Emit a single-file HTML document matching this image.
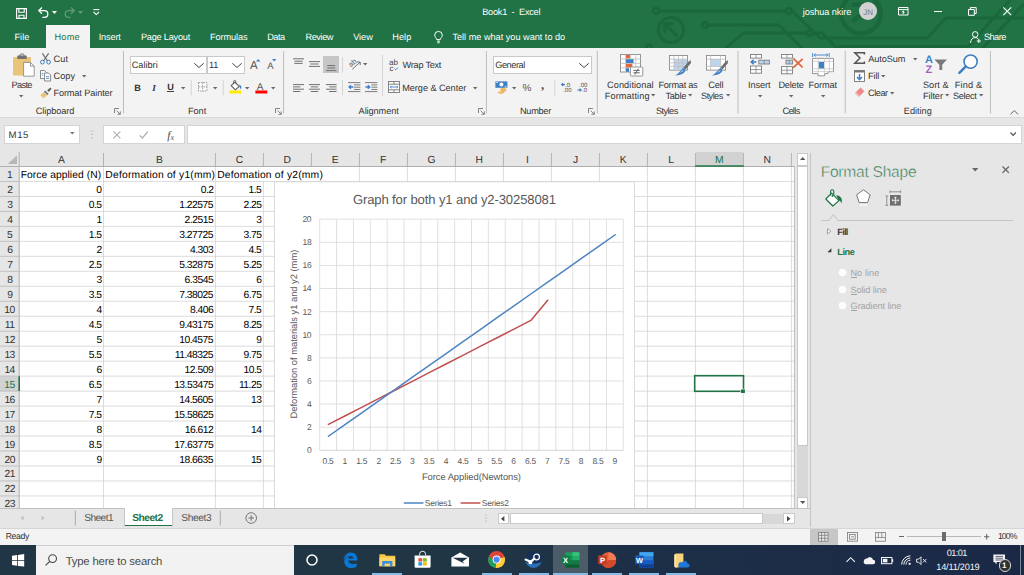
<!DOCTYPE html>
<html lang="en"><head><meta charset="utf-8"><title>Book1 - Excel</title>
<style>
html,body{margin:0;padding:0;background:#fff}
body{width:1024px;height:575px;overflow:hidden;position:relative;font-family:"Liberation Sans",sans-serif}
#r{position:absolute;left:0;top:0;width:1024px;height:575px;overflow:hidden;background:#e6e6e6}
#r div,#r svg,#r span{position:absolute;display:block}
#r span{line-height:20px;height:20px;white-space:pre;text-rendering:geometricPrecision}
#r svg{overflow:visible}
#r svg text{font-family:"Liberation Sans",sans-serif;text-rendering:geometricPrecision}
</style></head><body><div id="r">
<div style="left:0px;top:0px;width:1024px;height:48px;background:#217346;"></div>
<svg style="left:0px;top:0px;overflow:hidden" width="1024" height="48" viewBox="0 0 1024 48"><g fill="none" stroke="#1b673c" stroke-width="3" stroke-linecap="butt" stroke-linejoin="round">
<circle cx="656" cy="11" r="2.8"/><path d="M659 11H786"/><circle cx="789" cy="11" r="2.8"/>
<circle cx="671" cy="30" r="12.5"/><path d="M677.5 36.5L666 25M664.8 32.5V23.8H673.5" stroke-width="3.4" stroke-linejoin="miter"/>
<circle cx="705" cy="25" r="2.8"/><path d="M708 25H779L803 49"/>
<path d="M724 50L743 33H807"/><circle cx="810" cy="33" r="2.8"/><path d="M813 33H822L838 49"/>
<circle cx="649" cy="47.5" r="2.8"/>
<circle cx="861" cy="13.6" r="19.8" stroke-width="4.4"/><path d="M852 4.8H872.5L852.5 21.5" stroke-width="4.4" stroke-linejoin="miter"/>
<path d="M792 11L820 38H927L946 18H1024"/>
<path d="M838 46.5H968L1010 0"/>
<path d="M981 50L1024 4"/>
</g></svg>
<svg style="left:16px;top:7.5px;" width="11" height="11" viewBox="0 0 11 11"><g fill="none" stroke="#ffffff" stroke-width="1.1"><path d="M0.6 0.6H10.4V10.4H0.6Z"/><path d="M2.8 0.6V4.2H8.2V0.6"/><path d="M3 10.4V7.2H8V10.4"/></g></svg>
<svg style="left:38px;top:7px;" width="11" height="11" viewBox="0 0 11 11"><g fill="none" stroke="#ffffff" stroke-width="1.3"><path d="M0.8 3.6H6.4A3.4 3.4 0 0 1 6.4 10.4H4.4"/><path d="M4 0.5L0.8 3.6L4 6.8"/></g></svg>
<svg style="left:52.4px;top:11px" width="5" height="3" viewBox="0 0 5 3"><path d="M0 0H5L2.5 3Z" fill="#ffffff"/></svg>
<svg style="left:64px;top:7px;" width="11" height="11" viewBox="0 0 11 11"><g fill="none" stroke="#5f9a7a" stroke-width="1.3"><path d="M10.2 3.6H4.6A3.4 3.4 0 0 0 4.6 10.4H6.6"/><path d="M7 0.5L10.2 3.6L7 6.8"/></g></svg>
<svg style="left:78.4px;top:11px" width="5" height="3" viewBox="0 0 5 3"><path d="M0 0H5L2.5 3Z" fill="#5f9a7a"/></svg>
<svg style="left:92.5px;top:9px;" width="7" height="7" viewBox="0 0 7 7"><path d="M0.3 0.6H6.3" stroke="#ffffff" stroke-width="1.1"/><path d="M0.6 3L3.3 5.6L6 3" fill="none" stroke="#ffffff" stroke-width="1.1"/></svg>
<span style="left:482.21px;top:2px;font-size:9.2px;color:#ffffff;letter-spacing:-0.252px;">Book1  -  Excel</span>
<span style="left:802.74px;top:2px;font-size:9.2px;color:#ffffff;letter-spacing:-0.090px;">joshua nkire</span>
<div style="left:859px;top:2px;width:18px;height:18px;border-radius:50%;background:#d2d2d2"></div>
<span style="left:863.18px;top:3px;font-size:8px;color:#777;">JN</span>
<svg style="left:897.5px;top:7px;" width="11" height="8.5" viewBox="0 0 11 8.5"><g fill="none" stroke="#ffffff" stroke-width="1"><path d="M0.5 0.5H10V8H0.5Z"/><path d="M0.5 2.6H10"/><path d="M5.25 7V4M3.8 5.4L5.25 4L6.7 5.4"/></g></svg>
<div style="left:933.7px;top:11px;width:8px;height:1px;background:#ffffff;"></div>
<svg style="left:968px;top:7px;" width="9" height="9" viewBox="0 0 9 9"><g fill="none" stroke="#ffffff" stroke-width="1"><path d="M0.5 2.5H6.3V8.3H0.5Z"/><path d="M2.3 2.5V0.6H8.2V6.5H6.3"/></g></svg>
<svg style="left:1002.5px;top:7px;" width="8.5" height="8.5" viewBox="0 0 8.5 8.5"><path d="M0.3 0.3L8.2 8.2M8.2 0.3L0.3 8.2" stroke="#ffffff" stroke-width="1.1" fill="none"/></svg>
<div style="left:46px;top:25px;width:43.5px;height:23px;background:#f3f3f3;"></div>
<span style="left:14.41px;top:27px;font-size:9.2px;color:#ffffff;letter-spacing:0.052px;">File</span>
<span style="left:98.71px;top:27px;font-size:9.2px;color:#ffffff;letter-spacing:-0.159px;">Insert</span>
<span style="left:140.91px;top:27px;font-size:9.2px;color:#ffffff;letter-spacing:-0.226px;">Page Layout</span>
<span style="left:210.01px;top:27px;font-size:9.2px;color:#ffffff;letter-spacing:-0.098px;">Formulas</span>
<span style="left:267.21px;top:27px;font-size:9.2px;color:#ffffff;letter-spacing:-0.502px;">Data</span>
<span style="left:305.41px;top:27px;font-size:9.2px;color:#ffffff;letter-spacing:-0.414px;">Review</span>
<span style="left:353.21px;top:27px;font-size:9.2px;color:#ffffff;letter-spacing:-0.052px;">View</span>
<span style="left:392.21px;top:27px;font-size:9.2px;color:#ffffff;letter-spacing:0.074px;">Help</span>
<span style="left:54.41px;top:27px;font-size:9.2px;color:#217346;letter-spacing:0.249px;">Home</span>
<svg style="left:433.5px;top:30.5px;" width="9" height="12.5" viewBox="0 0 9 12.5"><g fill="none" stroke="#ffffff" stroke-width="1"><path d="M2.7 8.6C2.7 7 0.7 6.2 0.7 4.2A3.8 3.8 0 0 1 8.3 4.2C8.3 6.2 6.3 7 6.3 8.6Z"/><path d="M3 10.2H6M3.4 11.8H5.6"/></g></svg>
<span style="left:452.46px;top:27px;font-size:9.2px;color:#ffffff;letter-spacing:-0.024px;">Tell me what you want to do</span>
<svg style="left:969.5px;top:30.5px;" width="12" height="12.5" viewBox="0 0 12 12.5"><g fill="none" stroke="#ffffff" stroke-width="1"><circle cx="5.2" cy="3.4" r="2.8"/><path d="M0.6 12C0.6 8.6 2.6 6.6 5.2 6.6C6.4 6.6 7.4 7 8.2 7.8"/><path d="M8.8 8V12M6.8 10H10.8"/></g></svg>
<span style="left:983.88px;top:27px;font-size:9.2px;color:#ffffff;letter-spacing:-0.531px;">Share</span>
<div style="left:0px;top:48px;width:1024px;height:69.5px;background:#f3f3f3;"></div>
<div style="left:0px;top:117px;width:1024px;height:1px;background:#dadada;"></div>
<svg style="left:0px;top:0px;" width="1024" height="120" viewBox="0 0 1024 120"><path d="M123.5 51V113.5M283.6 51V113.5M486.4 51V113.5M597.3 51V113.5M738 51V113.5M845.2 51V113.5M990.4 51V113.5" stroke="#bdbdbd" stroke-width="1" fill="none"/><path d="M191.2 80V95.5M223.2 80V95.5M342.5 57V72.5M342.5 80V95.5M382.5 55V96.5M554.8 80V95.5" stroke="#d4d4d4" stroke-width="1" fill="none"/></svg>
<span style="left:35.80px;top:101px;font-size:9.2px;color:#333333;letter-spacing:-0.085px;">Clipboard</span>
<span style="left:187.91px;top:101px;font-size:9.2px;color:#333333;letter-spacing:-0.037px;">Font</span>
<span style="left:358.59px;top:101px;font-size:9.2px;color:#333333;letter-spacing:-0.079px;">Alignment</span>
<span style="left:520.01px;top:101px;font-size:9.2px;color:#333333;letter-spacing:-0.289px;">Number</span>
<span style="left:655.98px;top:101px;font-size:9.2px;color:#333333;letter-spacing:-0.548px;">Styles</span>
<span style="left:782.40px;top:101px;font-size:9.2px;color:#333333;letter-spacing:-0.644px;">Cells</span>
<span style="left:903.81px;top:101px;font-size:9.2px;color:#333333;letter-spacing:-0.020px;">Editing</span>
<svg style="left:114px;top:107.8px;" width="7" height="7" viewBox="0 0 7 7"><g fill="none" stroke="#777" stroke-width="0.9"><path d="M0.5 5V0.5H5"/><path d="M2.6 2.6L6.2 6.2M6.3 3.4V6.3H3.4"/></g></svg>
<svg style="left:275px;top:107.8px;" width="7" height="7" viewBox="0 0 7 7"><g fill="none" stroke="#777" stroke-width="0.9"><path d="M0.5 5V0.5H5"/><path d="M2.6 2.6L6.2 6.2M6.3 3.4V6.3H3.4"/></g></svg>
<svg style="left:478px;top:107.8px;" width="7" height="7" viewBox="0 0 7 7"><g fill="none" stroke="#777" stroke-width="0.9"><path d="M0.5 5V0.5H5"/><path d="M2.6 2.6L6.2 6.2M6.3 3.4V6.3H3.4"/></g></svg>
<svg style="left:588px;top:107.8px;" width="7" height="7" viewBox="0 0 7 7"><g fill="none" stroke="#777" stroke-width="0.9"><path d="M0.5 5V0.5H5"/><path d="M2.6 2.6L6.2 6.2M6.3 3.4V6.3H3.4"/></g></svg>
<svg style="left:1009.7px;top:109.6px;" width="8.5" height="4.6" viewBox="0 0 8.5 4.6"><path d="M0.4 4.3L4.25 0.6L8.1 4.3" fill="none" stroke="#666" stroke-width="1"/></svg>
<svg style="left:12.5px;top:54px;" width="22" height="23" viewBox="0 0 22 23"><rect x="0" y="3" width="18" height="18.5" rx="1" fill="#ebc47c"/>
<rect x="4.3" y="1.6" width="9.4" height="3.4" rx="0.6" fill="#727272"/><rect x="7" y="0" width="4" height="3" rx="1" fill="none" stroke="#727272" stroke-width="1"/>
<path d="M10.6 8.4H17.4L21.2 12.2V22.2H10.6Z" fill="#fff" stroke="#8c8c8c" stroke-width="0.9"/><path d="M17.4 8.4V12.2H21.2" fill="none" stroke="#8c8c8c" stroke-width="0.9"/></svg>
<span style="left:11.41px;top:75px;font-size:9.2px;color:#333333;letter-spacing:-0.613px;">Paste</span>
<svg style="left:19.00px;top:94.50px" width="4.4" height="2.4" viewBox="0 0 4.4 2.4"><path d="M0 0H4.4L2.2 2.4Z" fill="#666"/></svg>
<svg style="left:40px;top:53px;" width="11" height="11.5" viewBox="0 0 11 11.5"><g fill="none" stroke-width="1"><path d="M2.4 0.4L7.6 8M8.6 0.4L3.4 8" stroke="#6b6b6b" stroke-width="1.2"/><circle cx="2.4" cy="9.1" r="1.9" stroke="#3f7fc4"/><circle cx="8.6" cy="9.1" r="1.9" stroke="#3f7fc4"/></g></svg>
<span style="left:53.60px;top:49px;font-size:9.2px;color:#333333;letter-spacing:0.099px;">Cut</span>
<svg style="left:40px;top:70px;" width="11.2" height="11.5" viewBox="0 0 11.2 11.5"><g fill="#fff" stroke="#7a7a7a" stroke-width="0.9"><path d="M0.5 0.5H4.6L6.6 2.5V8.6H0.5Z"/><path d="M4.6 3H8.6L10.6 5V11H4.6Z"/></g><path d="M6 6.6H9.2M6 8.4H9.2" stroke="#3f7fc4" stroke-width="0.8"/><path d="M1.8 3.4H3.4M1.8 5H3.4" stroke="#3f7fc4" stroke-width="0.8"/></svg>
<span style="left:53.60px;top:66px;font-size:9.2px;color:#333333;letter-spacing:-0.014px;">Copy</span>
<svg style="left:81.80px;top:74.80px" width="4.4" height="2.4" viewBox="0 0 4.4 2.4"><path d="M0 0H4.4L2.2 2.4Z" fill="#666"/></svg>
<svg style="left:40px;top:87px;" width="12" height="11.5" viewBox="0 0 12 11.5"><path d="M7.2 3.2L10.3 0.4L11.6 1.8L8.8 4.9Z" fill="#5d5d5d"/><path d="M5.2 3.4L8.6 6.8L7.2 8.2L3.8 4.8Z" fill="#7d7d7d"/><path d="M3.6 5L7 8.4L3.4 11.2L0.4 8.2Z" fill="#ecc375"/></svg>
<span style="left:53.41px;top:83px;font-size:9.2px;color:#333333;letter-spacing:-0.117px;">Format Painter</span>
<div style="left:130px;top:56px;width:75.4px;height:16px;background:#fff;border:1px solid #c9c9c9;box-sizing:content-box"></div>
<div style="left:207px;top:56px;width:36px;height:16px;background:#fff;border:1px solid #c9c9c9;box-sizing:content-box"></div>
<span style="left:131.70px;top:55px;font-size:9.2px;color:#333333;">Calibri</span>
<svg style="left:194px;top:63px;" width="10" height="5" viewBox="0 0 10 5"><path d="M0.3 0.3L5.0 4.5L9.7 0.3" fill="none" stroke="#444" stroke-width="1"/></svg>
<span style="left:208.94px;top:55px;font-size:9.2px;color:#333333;">11</span>
<svg style="left:232px;top:63px;" width="10" height="5" viewBox="0 0 10 5"><path d="M0.3 0.3L5.0 4.5L9.7 0.3" fill="none" stroke="#444" stroke-width="1"/></svg>
<span style="left:249.90px;top:56px;font-size:11.5px;color:#555;letter-spacing:0.505px;">A</span>
<svg style="left:256px;top:59px;" width="4.4" height="2.6" viewBox="0 0 4.4 2.6"><path d="M0 2.6L2.2 0L4.4 2.6Z" fill="#3f7fc4"/></svg>
<span style="left:267.19px;top:57px;font-size:9.5px;color:#555;letter-spacing:0.126px;">A</span>
<svg style="left:272px;top:59px;" width="4.4" height="2.6" viewBox="0 0 4.4 2.6"><path d="M0 0H4.4L2.2 2.6Z" fill="#3f7fc4"/></svg>
<span style="left:134.36px;top:78px;font-size:9.2px;color:#333333;font-weight:bold;">B</span>
<span style="left:152.28px;top:78px;font-size:9.2px;color:#333333;font-weight:bold;font-style:italic;font-family:'Liberation Serif',serif;">I</span>
<span style="left:167.23px;top:77px;font-size:9.2px;color:#333333;letter-spacing:-0.084px;font-weight:bold;">U</span>
<div style="left:167.4px;top:91.4px;width:6.2px;height:0.9px;background:#444;"></div>
<svg style="left:180.90px;top:86.50px" width="4.4" height="2.4" viewBox="0 0 4.4 2.4"><path d="M0 0H4.4L2.2 2.4Z" fill="#666"/></svg>
<svg style="left:198px;top:82px;" width="9.2" height="9.6" viewBox="0 0 9.2 9.6"><rect x="0.5" y="0.5" width="8.4" height="8.6" fill="#fbfbfb"/><g fill="none" stroke="#8c8c8c" stroke-width="0.8" stroke-dasharray="1.6 0.9"><path d="M0.5 0.5H8.9V9.1H0.5Z"/><path d="M4.7 0.5V9.1M0.5 4.8H8.9"/></g></svg>
<svg style="left:213.00px;top:86.50px" width="4.4" height="2.4" viewBox="0 0 4.4 2.4"><path d="M0 0H4.4L2.2 2.4Z" fill="#666"/></svg>
<svg style="left:229.6px;top:80.4px;" width="12" height="10" viewBox="0 0 12 10"><path d="M4.8 2.2L9.2 6.4L5.4 9.8L1.2 5.6Z" fill="#fff" stroke="#5a5a5a" stroke-width="1.1" stroke-linejoin="round"/><path d="M3.6 4V1.4C3.6 0 5.8 0 5.8 1.4V3.4" fill="none" stroke="#5a5a5a" stroke-width="0.9"/><path d="M9.4 4.6C11.4 5.6 11.8 7.6 10.8 9.2C9.8 8.4 9.4 6.6 9.4 4.6Z" fill="#3f7fc4"/></svg>
<svg style="left:229px;top:90px;" width="13" height="4" viewBox="0 0 13 4"><rect x="0.4" y="0.5" width="11.9" height="3" fill="#ffeb00"/></svg>
<svg style="left:245.40px;top:86.50px" width="4.4" height="2.4" viewBox="0 0 4.4 2.4"><path d="M0 0H4.4L2.2 2.4Z" fill="#666"/></svg>
<span style="left:256.63px;top:78px;font-size:10px;color:#555;letter-spacing:1.986px;">A</span>
<svg style="left:254.6px;top:90px;" width="13" height="4" viewBox="0 0 13 4"><rect x="0.4" y="0.5" width="11.9" height="3" fill="#ff0000"/></svg>
<svg style="left:271.00px;top:86.50px" width="4.4" height="2.4" viewBox="0 0 4.4 2.4"><path d="M0 0H4.4L2.2 2.4Z" fill="#666"/></svg>
<svg style="left:293px;top:58px" width="14" height="10" viewBox="0 0 14 10"><path d="M0 0.8H11M1.3 3.2H9.7M1.3 5.4H9.7" stroke="#707070" stroke-width="1" fill="none"/></svg>
<svg style="left:309px;top:61px" width="14" height="10" viewBox="0 0 14 10"><path d="M0 0.6H11M1.3 3H9.7M0 5.4H11" stroke="#707070" stroke-width="1" fill="none"/></svg>
<div style="left:323px;top:56px;width:16.4px;height:17px;background:#c6c6c6;"></div>
<svg style="left:326px;top:64.6px" width="14" height="10" viewBox="0 0 14 10"><path d="M1.3 0.6H9.2M1.3 3H9.2M0 5.6H10.5" stroke="#707070" stroke-width="1" fill="none"/></svg>
<svg style="left:349px;top:58.4px;" width="12" height="12" viewBox="0 0 12 12"><text x="0.2" y="7.4" font-size="7.5" fill="#666" transform="rotate(-42 4 6)">ab</text><path d="M3.2 11.4L11 4.2M11.2 7.2V4H8" fill="none" stroke="#666" stroke-width="0.9"/></svg>
<svg style="left:362.80px;top:63.20px" width="4.4" height="2.4" viewBox="0 0 4.4 2.4"><path d="M0 0H4.4L2.2 2.4Z" fill="#666"/></svg>
<svg style="left:293px;top:83.8px" width="14" height="10" viewBox="0 0 14 10"><path d="M0 0.6H11M0 2.9H7.4M0 5.2H11M0 7.5H7.4" stroke="#707070" stroke-width="1" fill="none"/></svg>
<svg style="left:309px;top:83.8px" width="14" height="10" viewBox="0 0 14 10"><path d="M0 0.6H11M1.8 2.9H9.2M0 5.2H11M1.8 7.5H9.2" stroke="#707070" stroke-width="1" fill="none"/></svg>
<svg style="left:326px;top:83.8px" width="14" height="10" viewBox="0 0 14 10"><path d="M0 0.6H10.6M3.2 2.9H10.6M0 5.2H10.6M3.2 7.5H10.6" stroke="#707070" stroke-width="1" fill="none"/></svg>
<svg style="left:348.2px;top:82.2px;" width="12.6" height="10.2" viewBox="0 0 12.6 10.2"><path d="M0 0.6H12.4M6 2.9H12.4M6 5.2H12.4M6 7.5H12.4M0 9.6H12.4" stroke="#707070" stroke-width="0.9" fill="none"/><path d="M5.4 5H1.2M3 3.2L1 5L3 6.8" stroke="#3f7fc4" stroke-width="1.3" fill="none"/></svg>
<svg style="left:364.8px;top:82.2px;" width="12.6" height="10.2" viewBox="0 0 12.6 10.2"><path d="M0 0.6H12.4M6.4 2.9H12.4M6.4 5.2H12.4M6.4 7.5H12.4M0 9.6H12.4" stroke="#707070" stroke-width="0.9" fill="none"/><path d="M0.4 5H4.6M2.8 3.2L4.8 5L2.8 6.8" stroke="#3f7fc4" stroke-width="1.3" fill="none"/></svg>
<svg style="left:389.4px;top:58.6px;" width="10" height="12" viewBox="0 0 10 12"><text x="0" y="5.6" font-size="8" fill="#444">ab</text><text x="0.4" y="11.6" font-size="8" fill="#444">c</text><path d="M5.6 9.6L6.8 10.8L8.8 8.6" fill="none" stroke="#3f7fc4" stroke-width="1"/></svg>
<span style="left:402.57px;top:55px;font-size:9.2px;color:#333333;letter-spacing:-0.270px;">Wrap Text</span>
<svg style="left:388px;top:81px;" width="12" height="12" viewBox="0 0 12 12"><rect x="0.5" y="0.5" width="11" height="11" fill="#fff" stroke="#777" stroke-width="0.9"/><path d="M0.5 3.2H11.5M0.5 8.8H11.5M6 0.5V3.2M6 8.8V11.5" stroke="#777" stroke-width="0.9" fill="none"/><path d="M2.2 6H9.8M3.4 4.8L2.2 6L3.4 7.2M8.6 4.8L9.8 6L8.6 7.2" stroke="#3f7fc4" stroke-width="0.9" fill="none"/></svg>
<span style="left:402.21px;top:78px;font-size:9.2px;color:#333333;letter-spacing:-0.063px;">Merge &amp; Center</span>
<svg style="left:473.00px;top:86.50px" width="4.4" height="2.4" viewBox="0 0 4.4 2.4"><path d="M0 0H4.4L2.2 2.4Z" fill="#666"/></svg>
<div style="left:493px;top:56px;width:97.39999999999998px;height:16px;background:#fff;border:1px solid #c9c9c9;box-sizing:content-box"></div>
<span style="left:495.20px;top:55px;font-size:9.2px;color:#333333;letter-spacing:-0.421px;">General</span>
<svg style="left:578.8px;top:63px;" width="10" height="5" viewBox="0 0 10 5"><path d="M0.3 0.3L5.0 4.5L9.7 0.3" fill="none" stroke="#444" stroke-width="1"/></svg>
<svg style="left:495px;top:81px;" width="13" height="13" viewBox="0 0 13 13"><rect x="0.4" y="0.4" width="12" height="6.4" fill="#3f7fc4"/><circle cx="6.4" cy="3.6" r="2" fill="#fff"/><path d="M1.4 1.4H3M9.8 5.8H11.4" stroke="#fff" stroke-width="1"/><ellipse cx="8.4" cy="8" rx="3.2" ry="1.1" fill="#f0b65c"/><ellipse cx="8.4" cy="9.8" rx="3.2" ry="1.1" fill="#f0b65c"/><ellipse cx="6" cy="11.6" rx="3.2" ry="1.1" fill="#f0b65c"/></svg>
<svg style="left:511.60px;top:86.50px" width="4.4" height="2.4" viewBox="0 0 4.4 2.4"><path d="M0 0H4.4L2.2 2.4Z" fill="#666"/></svg>
<span style="left:522.41px;top:79px;font-size:10px;color:#555;letter-spacing:1.044px;">%</span>
<span style="left:540.97px;top:75px;font-size:13px;color:#555;font-weight:bold;font-family:'Liberation Serif',serif;">,</span>
<svg style="left:560.6px;top:82.4px;" width="11" height="11" viewBox="0 0 11 11"><text x="4.2" y="4.6" font-size="6" fill="#555">.0</text><text x="2.2" y="10" font-size="6" fill="#555">.00</text><path d="M4 2.6H0.8M2.2 1.2L0.6 2.6L2.2 4" stroke="#3f7fc4" stroke-width="1.1" fill="none"/></svg>
<svg style="left:577px;top:82.4px;" width="11" height="11" viewBox="0 0 11 11"><text x="2" y="4.6" font-size="6" fill="#555">.00</text><text x="5" y="10" font-size="6" fill="#555">.0</text><path d="M0.4 8H4M2.6 6.6L4.2 8L2.6 9.4" stroke="#3f7fc4" stroke-width="1.1" fill="none"/></svg>
<svg style="left:619.8px;top:54px;" width="23.5" height="22.5" viewBox="0 0 23.5 22.5"><rect x="0.5" y="0.5" width="20" height="17.5" fill="#fff" stroke="#8a8a8a" stroke-width="0.9"/><path d="M5.6 0.5V18M10.8 0.5V18M15.8 0.5V18M0.5 5H20.5M0.5 9.4H20.5M0.5 13.8H20.5" stroke="#bdbdbd" stroke-width="0.8" fill="none"/>
<rect x="6" y="1" width="4" height="3.4" fill="#e2673f"/><rect x="6" y="5.2" width="7.6" height="3.8" fill="#3f7fc4"/><rect x="6" y="9.8" width="6.4" height="3.6" fill="#e2673f"/><rect x="6" y="14.2" width="3" height="3.6" fill="#3f7fc4"/>
<rect x="10.4" y="13" width="12.4" height="9" rx="1" fill="#fff" stroke="#8a8a8a" stroke-width="0.9"/><path d="M13.4 16.4H19.8M13.4 18.8H19.8M18.4 14.6L14.8 20.6" stroke="#555" stroke-width="0.9" fill="none"/></svg>
<span style="left:607.10px;top:75px;font-size:9.2px;color:#333333;letter-spacing:0.057px;">Conditional</span>
<span style="left:604.81px;top:86px;font-size:9.2px;color:#333333;letter-spacing:0.089px;">Formatting</span>
<svg style="left:651.00px;top:94.40px" width="4.4" height="2.4" viewBox="0 0 4.4 2.4"><path d="M0 0H4.4L2.2 2.4Z" fill="#666"/></svg>
<svg style="left:668.5px;top:55px;" width="22.5" height="21" viewBox="0 0 22.5 21"><rect x="0.5" y="0.5" width="18" height="14.6" fill="#fff" stroke="#8a8a8a" stroke-width="0.9"/><rect x="5" y="4.4" width="13" height="10.4" fill="#bcd4ee"/><path d="M5 0.5V15M9.4 0.5V15M13.8 0.5V15M0.5 4.2H18.5M0.5 7.8H18.5M0.5 11.4H18.5" stroke="#bdbdbd" stroke-width="0.8" fill="none"/>
<path d="M14.4 12.8L19.6 6.4L22 5.2L21.6 8.4L16.4 14.6Z" fill="#6d6d6d"/><path d="M14.2 13L16.6 15C15.6 18.4 12 20.4 6 20.4C9.6 18.8 11.6 15.4 14.2 13Z" fill="#3f7fc4"/><path d="M12 17.4L14 15.4" stroke="#fff" stroke-width="0.9"/></svg>
<span style="left:658.41px;top:75px;font-size:9.2px;color:#333333;letter-spacing:-0.261px;">Format as</span>
<span style="left:665.46px;top:86px;font-size:9.2px;color:#333333;letter-spacing:-0.274px;">Table</span>
<svg style="left:688.00px;top:94.40px" width="4.4" height="2.4" viewBox="0 0 4.4 2.4"><path d="M0 0H4.4L2.2 2.4Z" fill="#666"/></svg>
<svg style="left:706px;top:55px;" width="22.5" height="21" viewBox="0 0 22.5 21"><rect x="0.5" y="0.5" width="19" height="14.6" fill="#fff" stroke="#8a8a8a" stroke-width="0.9"/><rect x="4.6" y="4.2" width="10" height="7.2" fill="#bcd4ee"/><path d="M4.6 0.5V15M14.6 0.5V15M0.5 4.2H19.5M0.5 11.4H19.5" stroke="#bdbdbd" stroke-width="0.8" fill="none"/>
<path d="M14.4 12.8L19.6 6.4L22 5.2L21.6 8.4L16.4 14.6Z" fill="#6d6d6d"/><path d="M14.2 13L16.6 15C15.6 18.4 12 20.4 6 20.4C9.6 18.8 11.6 15.4 14.2 13Z" fill="#3f7fc4"/><path d="M12 17.4L14 15.4" stroke="#fff" stroke-width="0.9"/></svg>
<span style="left:708.20px;top:75px;font-size:9.2px;color:#333333;letter-spacing:-0.175px;">Cell</span>
<span style="left:701.08px;top:86px;font-size:9.2px;color:#333333;letter-spacing:-0.568px;">Styles</span>
<svg style="left:726.10px;top:94.40px" width="4.4" height="2.4" viewBox="0 0 4.4 2.4"><path d="M0 0H4.4L2.2 2.4Z" fill="#666"/></svg>
<svg style="left:750px;top:54px;" width="20.5" height="20" viewBox="0 0 20.5 20"><rect x="0.5" y="0.5" width="11" height="3.6" fill="#fff" stroke="#7d7d7d" stroke-width="0.9"/><path d="M6.0 0.5V4.1" stroke="#7d7d7d" stroke-width="0.8"/><rect x="8.8" y="6.2" width="10.6" height="3.8" fill="#bcd4ee" stroke="#7d7d7d" stroke-width="0.9"/><path d="M14.100000000000001 6.2V10.0" stroke="#7d7d7d" stroke-width="0.8"/><rect x="0.5" y="12" width="11" height="7.2" fill="#fff" stroke="#7d7d7d" stroke-width="0.9"/><path d="M6.0 12V19.2" stroke="#7d7d7d" stroke-width="0.8"/><path d="M0.5 15.6H11.5" stroke="#7d7d7d" stroke-width="0.8"/><path d="M6.4 8H1.6M3.6 5.8L1.2 8L3.6 10.2" stroke="#3f7fc4" stroke-width="1.5" fill="none"/></svg>
<span style="left:748.11px;top:75px;font-size:9.2px;color:#333333;letter-spacing:-0.119px;">Insert</span>
<svg style="left:757.50px;top:94.70px" width="4.4" height="2.4" viewBox="0 0 4.4 2.4"><path d="M0 0H4.4L2.2 2.4Z" fill="#666"/></svg>
<svg style="left:781px;top:54px;" width="22" height="20.5" viewBox="0 0 22 20.5"><rect x="0.5" y="0.5" width="11" height="3.6" fill="#fff" stroke="#7d7d7d" stroke-width="0.9"/><path d="M6.0 0.5V4.1" stroke="#7d7d7d" stroke-width="0.8"/><rect x="5" y="6.2" width="6.6" height="3.8" fill="#bcd4ee" stroke="#7d7d7d" stroke-width="0.9"/><path d="M8.3 6.2V10.0" stroke="#7d7d7d" stroke-width="0.8"/><rect x="0.5" y="12.6" width="11" height="7.2" fill="#fff" stroke="#7d7d7d" stroke-width="0.9"/><path d="M6.0 12.6V19.8" stroke="#7d7d7d" stroke-width="0.8"/><path d="M0.5 16.2H11.5" stroke="#7d7d7d" stroke-width="0.8"/><path d="M12.2 4.4L21.6 13.4M21.6 4.8L12 13.8" stroke="#e2673f" stroke-width="1.8" fill="none"/></svg>
<span style="left:778.41px;top:75px;font-size:9.2px;color:#333333;letter-spacing:-0.231px;">Delete</span>
<svg style="left:788.80px;top:94.70px" width="4.4" height="2.4" viewBox="0 0 4.4 2.4"><path d="M0 0H4.4L2.2 2.4Z" fill="#666"/></svg>
<svg style="left:812px;top:52.8px;" width="22" height="23.5" viewBox="0 0 22 23.5"><path d="M0.6 0V4M17.2 0V4M2 2H15.8M3.6 0.6L2 2L3.6 3.4M14.2 0.6L15.8 2L14.2 3.4" stroke="#3f7fc4" stroke-width="0.9" fill="none"/>
<path d="M0.5 5.4H21.5V18.6H16V20.6H12.6V22.8H6V20.6H0.5Z" fill="#fff" stroke="#8a8a8a" stroke-width="0.9"/><path d="M6.2 5.4V21M12.4 5.4V21M17.4 5.4V18.6M0.5 8.4H21.5M0.5 15.8H21.5M0.5 18.6H21.5" stroke="#c6c6c6" stroke-width="0.8" fill="none"/><rect x="6.8" y="9" width="5.2" height="6.4" fill="#3f7fc4"/></svg>
<span style="left:808.41px;top:75px;font-size:9.2px;color:#333333;letter-spacing:-0.098px;">Format</span>
<svg style="left:821.00px;top:94.70px" width="4.4" height="2.4" viewBox="0 0 4.4 2.4"><path d="M0 0H4.4L2.2 2.4Z" fill="#666"/></svg>
<svg style="left:853.8px;top:52px;" width="11.5" height="12" viewBox="0 0 11.5 12"><path d="M10.4 2.4V0.8H0.8L6 6L0.8 11.2H10.4V9.6" fill="none" stroke="#555" stroke-width="1.5" stroke-linejoin="miter"/></svg>
<span style="left:868.29px;top:49px;font-size:9.2px;color:#333333;letter-spacing:-0.121px;">AutoSum</span>
<svg style="left:912.50px;top:57.60px" width="4.4" height="2.4" viewBox="0 0 4.4 2.4"><path d="M0 0H4.4L2.2 2.4Z" fill="#666"/></svg>
<svg style="left:854.4px;top:69.6px;" width="11" height="12" viewBox="0 0 11 12"><rect x="0.5" y="0.5" width="10" height="11" fill="#fff" stroke="#777" stroke-width="0.9"/><rect x="0.5" y="0.5" width="10" height="2" fill="#777"/><path d="M5.5 4V9.4M3 7L5.5 9.6L8 7" stroke="#3f7fc4" stroke-width="1.5" fill="none"/></svg>
<span style="left:867.91px;top:66px;font-size:9.2px;color:#333333;letter-spacing:-0.078px;">Fill</span>
<svg style="left:881.00px;top:74.80px" width="4.4" height="2.4" viewBox="0 0 4.4 2.4"><path d="M0 0H4.4L2.2 2.4Z" fill="#666"/></svg>
<svg style="left:854.6px;top:87.4px;" width="10" height="10.5" viewBox="0 0 10 10.5"><path d="M5.6 0.4L9.4 4.2L4.2 9.4L0.4 5.6Z" fill="#ee8a8e"/><path d="M0.4 5.6L4.2 9.4L3 10.6L-0.8 6.8Z" fill="#f6b8ba" transform="translate(0.6 -0.6)"/></svg>
<span style="left:868.10px;top:83px;font-size:9.2px;color:#333333;letter-spacing:-0.472px;">Clear</span>
<svg style="left:890.10px;top:91.60px" width="4.4" height="2.4" viewBox="0 0 4.4 2.4"><path d="M0 0H4.4L2.2 2.4Z" fill="#666"/></svg>
<svg style="left:925px;top:54.4px;" width="22.5" height="20" viewBox="0 0 22.5 20"><text x="0" y="9" font-size="11" fill="#3f7fc4" font-weight="bold">A</text><text x="0.6" y="19.4" font-size="11" fill="#a45fc0" font-weight="bold">Z</text><path d="M9.4 5.6H22L17.2 10.8V16H14.4V10.8Z" fill="#7a7a7a"/></svg>
<span style="left:922.88px;top:75px;font-size:9.2px;color:#333333;letter-spacing:0.040px;">Sort &amp;</span>
<span style="left:922.91px;top:86px;font-size:9.2px;color:#333333;letter-spacing:-0.071px;">Filter</span>
<svg style="left:945.00px;top:94.40px" width="4.4" height="2.4" viewBox="0 0 4.4 2.4"><path d="M0 0H4.4L2.2 2.4Z" fill="#666"/></svg>
<svg style="left:958px;top:54px;" width="20.5" height="20.5" viewBox="0 0 20.5 20.5"><circle cx="12.6" cy="7.6" r="6.6" fill="#fff" stroke="#3f7fc4" stroke-width="1.6"/><path d="M7.8 12.4L1.4 18.8" stroke="#3f7fc4" stroke-width="2.6" stroke-linecap="round"/></svg>
<span style="left:954.81px;top:75px;font-size:9.2px;color:#333333;letter-spacing:0.154px;">Find &amp;</span>
<span style="left:952.88px;top:86px;font-size:9.2px;color:#333333;letter-spacing:-0.327px;">Select</span>
<svg style="left:978.70px;top:94.40px" width="4.4" height="2.4" viewBox="0 0 4.4 2.4"><path d="M0 0H4.4L2.2 2.4Z" fill="#666"/></svg>
<div style="left:4px;top:125px;width:74px;height:17px;background:#fff;border:1px solid #d4d4d4"></div>
<div style="left:103px;top:125px;width:80px;height:17px;background:#fff;border:1px solid #d4d4d4"></div>
<div style="left:187px;top:125px;width:833px;height:17px;background:#fff;border:1px solid #d4d4d4"></div>
<span style="left:8.58px;top:126px;font-size:9.6px;color:#333333;letter-spacing:0.560px;">M15</span>
<svg style="left:69.90px;top:132.30px" width="4.6" height="2.6" viewBox="0 0 4.6 2.6"><path d="M0 0H4.6L2.3 2.6Z" fill="#777"/></svg>
<svg style="left:90.6px;top:130.4px;" width="2" height="9" viewBox="0 0 2 9"><circle cx="1" cy="1" r="0.6" fill="#999"/><circle cx="1" cy="4.4" r="0.6" fill="#999"/><circle cx="1" cy="7.8" r="0.6" fill="#999"/></svg>
<svg style="left:113.2px;top:131px;" width="7.8" height="7.8" viewBox="0 0 7.8 7.8"><path d="M0.4 0.4L7.4 7.4M7.4 0.4L0.4 7.4" stroke="#b0b0b0" stroke-width="1.2" fill="none"/></svg>
<svg style="left:139.4px;top:131px;" width="9.4" height="7.8" viewBox="0 0 9.4 7.8"><path d="M0.6 4.4L3.4 7L8.8 0.6" stroke="#b0b0b0" stroke-width="1.3" fill="none"/></svg>
<span style="left:167.27px;top:126px;font-size:11.5px;color:#4a4a4a;font-style:italic;font-family:'Liberation Serif',serif;">f</span>
<span style="left:170.49px;top:128px;font-size:8px;color:#4a4a4a;font-style:italic;font-family:'Liberation Serif',serif;">x</span>
<svg style="left:1010.4px;top:132.2px;" width="6.4" height="4.4" viewBox="0 0 6.4 4.4"><path d="M0.5 0.5L3.2 3.4L5.9 0.5" fill="none" stroke="#555" stroke-width="1.2"/></svg>
<div style="left:0px;top:152px;width:794.6px;height:356px;background:#fff;"></div>
<div style="left:0px;top:152px;width:794.6px;height:14.6px;background:#e6e6e6;"></div>
<div style="left:0px;top:152px;width:19.6px;height:356px;background:#e6e6e6;"></div>
<svg style="left:0px;top:0px;overflow:hidden" width="1024" height="508" viewBox="0 0 1024 508"><path d="M103.5 166.4V508M215.4 166.4V508M263.4 166.4V508M311.4 166.4V508M359.4 166.4V508M407.4 166.4V508M455.4 166.4V508M503.4 166.4V508M551.4 166.4V508M599.4 166.4V508M647.4 166.4V508M695.4 166.4V508M743.4 166.4V508M791.4 166.4V508M19.6 181.47H794.6M19.6 196.45H794.6M19.6 211.42H794.6M19.6 226.40H794.6M19.6 241.37H794.6M19.6 256.34H794.6M19.6 271.32H794.6M19.6 286.29H794.6M19.6 301.27H794.6M19.6 316.24H794.6M19.6 331.21H794.6M19.6 346.19H794.6M19.6 361.16H794.6M19.6 376.14H794.6M19.6 391.11H794.6M19.6 406.08H794.6M19.6 421.06H794.6M19.6 436.03H794.6M19.6 451.01H794.6M19.6 465.98H794.6M19.6 480.95H794.6M19.6 495.93H794.6" stroke="#d0d0d0" stroke-width="0.75" fill="none"/><rect x="695.9" y="152" width="47" height="13.4" fill="#d2d2d2"/><rect x="0" y="376.63599999999997" width="18.6" height="14.4" fill="#d2d2d2"/><path d="M103.5 153V166M215.4 153V166M263.4 153V166M311.4 153V166M359.4 153V166M407.4 153V166M455.4 153V166M503.4 153V166M551.4 153V166M599.4 153V166M647.4 153V166M695.4 153V166M743.4 153V166M791.4 153V166" stroke="#a0a0a0" stroke-width="0.75" fill="none"/><path d="M0 181.47H19M0 196.45H19M0 211.42H19M0 226.40H19M0 241.37H19M0 256.34H19M0 271.32H19M0 286.29H19M0 301.27H19M0 316.24H19M0 331.21H19M0 346.19H19M0 361.16H19M0 376.14H19M0 391.11H19M0 406.08H19M0 421.06H19M0 436.03H19M0 451.01H19M0 465.98H19M0 480.95H19M0 495.93H19" stroke="#b4b4b4" stroke-width="0.75" fill="none"/><path d="M0 166.5H794.6" stroke="#a8a8a8" stroke-width="0.9" fill="none"/><path d="M19.2 152V508" stroke="#bcbcbc" stroke-width="1.2" fill="none"/><path d="M794.4 166V508" stroke="#bdbdbd" stroke-width="1" fill="none"/><path d="M695.2 166H743.8" stroke="#217346" stroke-width="1.7" fill="none"/><path d="M19.2 376.13599999999997V391.11" stroke="#217346" stroke-width="1.6" fill="none"/><path d="M17 155.6V164H7.6Z" fill="#b8b8b8"/></svg>
<span style="left:58.00px;top:151px;font-size:10.3px;color:#333333;">A</span>
<span style="left:155.93px;top:151px;font-size:10.3px;color:#333333;">B</span>
<span style="left:235.65px;top:151px;font-size:10.3px;color:#333333;">C</span>
<span style="left:283.49px;top:151px;font-size:10.3px;color:#333333;">D</span>
<span style="left:331.85px;top:151px;font-size:10.3px;color:#333333;">E</span>
<span style="left:380.02px;top:151px;font-size:10.3px;color:#333333;">F</span>
<span style="left:427.51px;top:151px;font-size:10.3px;color:#333333;">G</span>
<span style="left:475.55px;top:151px;font-size:10.3px;color:#333333;">H</span>
<span style="left:525.94px;top:151px;font-size:10.3px;color:#333333;">I</span>
<span style="left:572.99px;top:151px;font-size:10.3px;color:#333333;">J</span>
<span style="left:619.82px;top:151px;font-size:10.3px;color:#333333;">K</span>
<span style="left:668.36px;top:151px;font-size:10.3px;color:#333333;">L</span>
<span style="left:715.03px;top:151px;font-size:10.3px;color:#217346;">M</span>
<span style="left:763.55px;top:151px;font-size:10.3px;color:#333333;">N</span>
<span style="left:7.10px;top:166px;font-size:10.3px;color:#333333;letter-spacing:-0.480px;">1</span>
<span style="left:7.28px;top:181px;font-size:10.3px;color:#333333;letter-spacing:-0.480px;">2</span>
<span style="left:7.20px;top:196px;font-size:10.3px;color:#333333;letter-spacing:-0.480px;">3</span>
<span style="left:7.30px;top:211px;font-size:10.3px;color:#333333;letter-spacing:-0.480px;">4</span>
<span style="left:7.12px;top:226px;font-size:10.3px;color:#333333;letter-spacing:-0.480px;">5</span>
<span style="left:7.22px;top:241px;font-size:10.3px;color:#333333;letter-spacing:-0.480px;">6</span>
<span style="left:7.16px;top:256px;font-size:10.3px;color:#333333;letter-spacing:-0.480px;">7</span>
<span style="left:7.21px;top:271px;font-size:10.3px;color:#333333;letter-spacing:-0.480px;">8</span>
<span style="left:7.21px;top:286px;font-size:10.3px;color:#333333;letter-spacing:-0.480px;">9</span>
<span style="left:4.35px;top:301px;font-size:10.3px;color:#333333;letter-spacing:-0.480px;">10</span>
<span style="left:4.84px;top:316px;font-size:10.3px;color:#333333;letter-spacing:-0.480px;">11</span>
<span style="left:4.41px;top:331px;font-size:10.3px;color:#333333;letter-spacing:-0.480px;">12</span>
<span style="left:4.39px;top:346px;font-size:10.3px;color:#333333;letter-spacing:-0.480px;">13</span>
<span style="left:4.39px;top:361px;font-size:10.3px;color:#333333;letter-spacing:-0.480px;">14</span>
<span style="left:4.37px;top:376px;font-size:10.3px;color:#217346;letter-spacing:-0.480px;">15</span>
<span style="left:4.39px;top:391px;font-size:10.3px;color:#333333;letter-spacing:-0.480px;">16</span>
<span style="left:4.39px;top:406px;font-size:10.3px;color:#333333;letter-spacing:-0.480px;">17</span>
<span style="left:4.39px;top:421px;font-size:10.3px;color:#333333;letter-spacing:-0.480px;">18</span>
<span style="left:4.39px;top:436px;font-size:10.3px;color:#333333;letter-spacing:-0.480px;">19</span>
<span style="left:4.53px;top:451px;font-size:10.3px;color:#333333;letter-spacing:-0.480px;">20</span>
<span style="left:4.58px;top:465px;font-size:10.3px;color:#333333;letter-spacing:-0.480px;">21</span>
<span style="left:4.59px;top:480px;font-size:10.3px;color:#333333;letter-spacing:-0.480px;">22</span>
<span style="left:4.57px;top:495px;font-size:10.3px;color:#333333;letter-spacing:-0.480px;">23</span>
<div style="left:216px;top:167.4px;width:107px;height:13.4px;background:#fff;"></div>
<span style="left:20.74px;top:166px;font-size:10.3px;color:#000;letter-spacing:0.049px;">Force applied (N)</span>
<span style="left:105.34px;top:166px;font-size:10.3px;color:#000;letter-spacing:0.220px;">Deformation of y1(mm)</span>
<span style="left:217.14px;top:166px;font-size:10.3px;color:#000;letter-spacing:0.202px;">Defomation of y2(mm)</span>
<span style="left:96.35px;top:181px;font-size:10.3px;color:#000;letter-spacing:-0.480px;">0</span>
<span style="left:200.67px;top:181px;font-size:10.3px;color:#000;letter-spacing:-0.480px;">0.2</span>
<span style="left:248.48px;top:181px;font-size:10.3px;color:#000;letter-spacing:-0.480px;">1.5</span>
<span style="left:88.68px;top:196px;font-size:10.3px;color:#000;letter-spacing:-0.480px;">0.5</span>
<span style="left:179.20px;top:196px;font-size:10.3px;color:#000;letter-spacing:-0.480px;">1.22575</span>
<span style="left:243.41px;top:196px;font-size:10.3px;color:#000;letter-spacing:-0.480px;">2.25</span>
<span style="left:96.53px;top:211px;font-size:10.3px;color:#000;letter-spacing:-0.480px;">1</span>
<span style="left:184.60px;top:211px;font-size:10.3px;color:#000;letter-spacing:-0.480px;">2.2515</span>
<span style="left:256.25px;top:211px;font-size:10.3px;color:#000;letter-spacing:-0.480px;">3</span>
<span style="left:88.68px;top:226px;font-size:10.3px;color:#000;letter-spacing:-0.480px;">1.5</span>
<span style="left:179.20px;top:226px;font-size:10.3px;color:#000;letter-spacing:-0.480px;">3.27725</span>
<span style="left:243.41px;top:226px;font-size:10.3px;color:#000;letter-spacing:-0.480px;">3.75</span>
<span style="left:96.53px;top:241px;font-size:10.3px;color:#000;letter-spacing:-0.480px;">2</span>
<span style="left:189.97px;top:241px;font-size:10.3px;color:#000;letter-spacing:-0.480px;">4.303</span>
<span style="left:248.48px;top:241px;font-size:10.3px;color:#000;letter-spacing:-0.480px;">4.5</span>
<span style="left:88.68px;top:256px;font-size:10.3px;color:#000;letter-spacing:-0.480px;">2.5</span>
<span style="left:179.20px;top:256px;font-size:10.3px;color:#000;letter-spacing:-0.480px;">5.32875</span>
<span style="left:243.41px;top:256px;font-size:10.3px;color:#000;letter-spacing:-0.480px;">5.25</span>
<span style="left:96.45px;top:271px;font-size:10.3px;color:#000;letter-spacing:-0.480px;">3</span>
<span style="left:184.60px;top:271px;font-size:10.3px;color:#000;letter-spacing:-0.480px;">6.3545</span>
<span style="left:256.22px;top:271px;font-size:10.3px;color:#000;letter-spacing:-0.480px;">6</span>
<span style="left:88.68px;top:286px;font-size:10.3px;color:#000;letter-spacing:-0.480px;">3.5</span>
<span style="left:179.20px;top:286px;font-size:10.3px;color:#000;letter-spacing:-0.480px;">7.38025</span>
<span style="left:243.41px;top:286px;font-size:10.3px;color:#000;letter-spacing:-0.480px;">6.75</span>
<span style="left:96.51px;top:301px;font-size:10.3px;color:#000;letter-spacing:-0.480px;">4</span>
<span style="left:189.94px;top:301px;font-size:10.3px;color:#000;letter-spacing:-0.480px;">8.406</span>
<span style="left:248.48px;top:301px;font-size:10.3px;color:#000;letter-spacing:-0.480px;">7.5</span>
<span style="left:88.68px;top:316px;font-size:10.3px;color:#000;letter-spacing:-0.480px;">4.5</span>
<span style="left:179.20px;top:316px;font-size:10.3px;color:#000;letter-spacing:-0.480px;">9.43175</span>
<span style="left:243.41px;top:316px;font-size:10.3px;color:#000;letter-spacing:-0.480px;">8.25</span>
<span style="left:96.39px;top:331px;font-size:10.3px;color:#000;letter-spacing:-0.480px;">5</span>
<span style="left:179.20px;top:331px;font-size:10.3px;color:#000;letter-spacing:-0.480px;">10.4575</span>
<span style="left:256.22px;top:331px;font-size:10.3px;color:#000;letter-spacing:-0.480px;">9</span>
<span style="left:88.68px;top:346px;font-size:10.3px;color:#000;letter-spacing:-0.480px;">5.5</span>
<span style="left:174.68px;top:346px;font-size:10.3px;color:#000;letter-spacing:-0.480px;">11.48325</span>
<span style="left:243.41px;top:346px;font-size:10.3px;color:#000;letter-spacing:-0.480px;">9.75</span>
<span style="left:96.42px;top:361px;font-size:10.3px;color:#000;letter-spacing:-0.480px;">6</span>
<span style="left:184.62px;top:361px;font-size:10.3px;color:#000;letter-spacing:-0.480px;">12.509</span>
<span style="left:243.41px;top:361px;font-size:10.3px;color:#000;letter-spacing:-0.480px;">10.5</span>
<span style="left:88.68px;top:376px;font-size:10.3px;color:#000;letter-spacing:-0.480px;">6.5</span>
<span style="left:174.13px;top:376px;font-size:10.3px;color:#000;letter-spacing:-0.480px;">13.53475</span>
<span style="left:238.89px;top:376px;font-size:10.3px;color:#000;letter-spacing:-0.480px;">11.25</span>
<span style="left:96.45px;top:391px;font-size:10.3px;color:#000;letter-spacing:-0.480px;">7</span>
<span style="left:179.20px;top:391px;font-size:10.3px;color:#000;letter-spacing:-0.480px;">14.5605</span>
<span style="left:250.92px;top:391px;font-size:10.3px;color:#000;letter-spacing:-0.480px;">13</span>
<span style="left:88.68px;top:406px;font-size:10.3px;color:#000;letter-spacing:-0.480px;">7.5</span>
<span style="left:174.13px;top:406px;font-size:10.3px;color:#000;letter-spacing:-0.480px;">15.58625</span>
<span style="left:96.42px;top:421px;font-size:10.3px;color:#000;letter-spacing:-0.480px;">8</span>
<span style="left:184.68px;top:421px;font-size:10.3px;color:#000;letter-spacing:-0.480px;">16.612</span>
<span style="left:250.92px;top:421px;font-size:10.3px;color:#000;letter-spacing:-0.480px;">14</span>
<span style="left:88.68px;top:436px;font-size:10.3px;color:#000;letter-spacing:-0.480px;">8.5</span>
<span style="left:174.13px;top:436px;font-size:10.3px;color:#000;letter-spacing:-0.480px;">17.63775</span>
<span style="left:96.42px;top:451px;font-size:10.3px;color:#000;letter-spacing:-0.480px;">9</span>
<span style="left:179.20px;top:451px;font-size:10.3px;color:#000;letter-spacing:-0.480px;">18.6635</span>
<span style="left:250.88px;top:451px;font-size:10.3px;color:#000;letter-spacing:-0.480px;">15</span>
<svg style="left:0px;top:0px;" width="1024" height="508" viewBox="0 0 1024 508"><rect x="694.7" y="375.7" width="48.8" height="15.6" fill="#fff" stroke="#217346" stroke-width="1.6"/><rect x="740.3" y="388.8" width="5" height="4.6" fill="#fff"/><rect x="740.9" y="389.4" width="4" height="3.6" fill="#217346"/></svg>
<svg style="left:0px;top:0px;overflow:hidden" width="1024" height="508" viewBox="0 0 1024 508"><rect x="274.6" y="181.8" width="360.0" height="340" fill="#fff" stroke="#cfcfcf" stroke-width="0.75"/><path d="M319.70 219.2V450.3M336.57 219.2V450.3M353.43 219.2V450.3M370.30 219.2V450.3M387.17 219.2V450.3M404.03 219.2V450.3M420.90 219.2V450.3M437.77 219.2V450.3M454.63 219.2V450.3M471.50 219.2V450.3M488.37 219.2V450.3M505.23 219.2V450.3M522.10 219.2V450.3M538.97 219.2V450.3M555.83 219.2V450.3M572.70 219.2V450.3M589.57 219.2V450.3M606.43 219.2V450.3M623.30 219.2V450.3M319.7 219.20H623.3M319.7 242.31H623.3M319.7 265.42H623.3M319.7 288.53H623.3M319.7 311.64H623.3M319.7 334.75H623.3M319.7 357.86H623.3M319.7 380.97H623.3M319.7 404.08H623.3M319.7 427.19H623.3" stroke="#d6d6d6" stroke-width="0.75" fill="none"/><path d="M319.7 450.3H623.3" stroke="#c4c4c4" stroke-width="0.75" fill="none"/><polyline points="328.43,424.40 345.30,415.74 362.17,407.07 379.03,398.40 395.90,389.74 412.77,381.07 429.63,372.40 446.50,363.74 463.37,355.07 480.23,346.41 497.10,337.74 513.97,329.07 530.83,320.41 547.70,300.19" fill="none" stroke="#c0504d" stroke-width="1.5" stroke-linecap="round" stroke-linejoin="round"/><polyline points="328.43,436.24 345.30,424.38 362.17,412.53 379.03,400.68 395.90,388.83 412.77,376.97 429.63,365.12 446.50,353.27 463.37,341.42 480.23,329.56 497.10,317.71 513.97,305.86 530.83,294.01 547.70,282.15 564.57,270.30 581.43,258.45 598.30,246.60 615.17,234.74" fill="none" stroke="#4d83c2" stroke-width="1.5" stroke-linecap="round" stroke-linejoin="round"/><path d="M403.8 503H423.4" stroke="#4d83c2" stroke-width="1.5"/><path d="M460.6 503H480.4" stroke="#c0504d" stroke-width="1.5"/></svg>
<span style="left:352.89px;top:190px;font-size:13.1px;color:#595959;letter-spacing:-0.135px;">Graph for both y1 and y2-30258081</span>
<span style="left:306.94px;top:440px;font-size:8.5px;color:#595959;letter-spacing:-0.300px;">0</span>
<span style="left:307.06px;top:417px;font-size:8.5px;color:#595959;letter-spacing:-0.300px;">2</span>
<span style="left:306.88px;top:394px;font-size:8.5px;color:#595959;letter-spacing:-0.300px;">4</span>
<span style="left:306.98px;top:371px;font-size:8.5px;color:#595959;letter-spacing:-0.300px;">6</span>
<span style="left:306.96px;top:348px;font-size:8.5px;color:#595959;letter-spacing:-0.300px;">8</span>
<span style="left:302.44px;top:325px;font-size:8.5px;color:#595959;letter-spacing:-0.300px;">10</span>
<span style="left:302.54px;top:302px;font-size:8.5px;color:#595959;letter-spacing:-0.300px;">12</span>
<span style="left:302.41px;top:278px;font-size:8.5px;color:#595959;letter-spacing:-0.300px;">14</span>
<span style="left:302.50px;top:255px;font-size:8.5px;color:#595959;letter-spacing:-0.300px;">16</span>
<span style="left:302.46px;top:232px;font-size:8.5px;color:#595959;letter-spacing:-0.300px;">18</span>
<span style="left:302.44px;top:209px;font-size:8.5px;color:#595959;letter-spacing:-0.300px;">20</span>
<span style="left:322.56px;top:451px;font-size:8.5px;color:#595959;letter-spacing:-0.300px;">0.5</span>
<span style="left:342.53px;top:451px;font-size:8.5px;color:#595959;letter-spacing:-0.300px;">1</span>
<span style="left:356.15px;top:451px;font-size:8.5px;color:#595959;letter-spacing:-0.300px;">1.5</span>
<span style="left:376.38px;top:451px;font-size:8.5px;color:#595959;letter-spacing:-0.300px;">2</span>
<span style="left:390.00px;top:451px;font-size:8.5px;color:#595959;letter-spacing:-0.300px;">2.5</span>
<span style="left:409.95px;top:451px;font-size:8.5px;color:#595959;letter-spacing:-0.300px;">3</span>
<span style="left:423.62px;top:451px;font-size:8.5px;color:#595959;letter-spacing:-0.300px;">3.5</span>
<span style="left:443.82px;top:451px;font-size:8.5px;color:#595959;letter-spacing:-0.300px;">4</span>
<span style="left:457.53px;top:451px;font-size:8.5px;color:#595959;letter-spacing:-0.300px;">4.5</span>
<span style="left:477.51px;top:451px;font-size:8.5px;color:#595959;letter-spacing:-0.300px;">5</span>
<span style="left:491.17px;top:451px;font-size:8.5px;color:#595959;letter-spacing:-0.300px;">5.5</span>
<span style="left:511.28px;top:451px;font-size:8.5px;color:#595959;letter-spacing:-0.300px;">6</span>
<span style="left:524.94px;top:451px;font-size:8.5px;color:#595959;letter-spacing:-0.300px;">6.5</span>
<span style="left:544.92px;top:451px;font-size:8.5px;color:#595959;letter-spacing:-0.300px;">7</span>
<span style="left:558.53px;top:451px;font-size:8.5px;color:#595959;letter-spacing:-0.300px;">7.5</span>
<span style="left:578.74px;top:451px;font-size:8.5px;color:#595959;letter-spacing:-0.300px;">8</span>
<span style="left:592.42px;top:451px;font-size:8.5px;color:#595959;letter-spacing:-0.300px;">8.5</span>
<span style="left:612.48px;top:451px;font-size:8.5px;color:#595959;letter-spacing:-0.300px;">9</span>
<span style="left:421.89px;top:467px;font-size:9.4px;color:#595959;letter-spacing:-0.044px;">Force Applied(Newtons)</span>
<span style="left:424.84px;top:493px;font-size:8.5px;color:#595959;letter-spacing:-0.296px;">Series1</span>
<span style="left:481.84px;top:493px;font-size:8.5px;color:#595959;letter-spacing:-0.296px;">Series2</span>
<span style="left:209.54px;top:323.80px;font-size:9.4px;color:#595959;letter-spacing:-0.029px;transform:rotate(-90deg);transform-origin:84.46px 10px;">Deformation of materials y1 and y2 (mm)</span>
<div style="left:794.9px;top:152px;width:15.2px;height:356px;background:#e6e6e6;"></div>
<div style="left:797px;top:153.2px;width:9.4px;height:10.4px;background:#fff;border:1px solid #c9c9c9"></div>
<div style="left:797px;top:165.6px;width:9.4px;height:278.4px;background:#fff;border:1px solid #c9c9c9"></div>
<div style="left:797px;top:445.6px;width:11px;height:51px;background:#d8d8d8;"></div>
<div style="left:797px;top:496.6px;width:9.4px;height:10.4px;background:#fff;border:1px solid #c9c9c9"></div>
<svg style="left:800px;top:157.4px;" width="5.4" height="3" viewBox="0 0 5.4 3"><path d="M0 3H5.4L2.7 0Z" fill="#555"/></svg>
<svg style="left:800px;top:500.6px;" width="5.4" height="3" viewBox="0 0 5.4 3"><path d="M0 0H5.4L2.7 3Z" fill="#555"/></svg>
<div style="left:810px;top:152px;width:214px;height:376px;background:#e6e6e6;"></div>
<svg style="left:0px;top:0px;" width="1024" height="575" viewBox="0 0 1024 575"><path d="M810.5 153V527" stroke="#c4c4c4" stroke-width="1" fill="none"/><path d="M821 220.5H829L833.4 214.6L837.8 220.5H1013" stroke="#c4c4c4" stroke-width="1" fill="none"/></svg>
<span style="left:820.67px;top:163px;font-size:15.6px;color:#217346;letter-spacing:-0.259px;-webkit-text-stroke:0.45px #e6e6e6;">Format Shape</span>
<svg style="left:971.60px;top:167.70px" width="6.4" height="3.4" viewBox="0 0 6.4 3.4"><path d="M0 0H6.4L3.2 3.4Z" fill="#666"/></svg>
<svg style="left:1002.2px;top:165.6px;" width="7.4" height="7.4" viewBox="0 0 7.4 7.4"><path d="M0.5 0.5L6.9 6.9M6.9 0.5L0.5 6.9" stroke="#666" stroke-width="1.3" fill="none"/></svg>
<svg style="left:825px;top:189px;" width="18" height="18" viewBox="0 0 18 18"><path d="M6.6 4.2L14 11.6L7.8 17L0.8 10Z" fill="#fff" stroke="#217346" stroke-width="1.2" stroke-linejoin="round"/><path d="M5.6 6.6V2.4C5.6 0.2 8.8 0.2 8.8 2.4V6" fill="none" stroke="#217346" stroke-width="1.1"/><circle cx="7.4" cy="7" r="0.9" fill="#217346"/><path d="M11.2 6.2C15.6 6.6 17.8 9.6 16.6 14.2C15.6 12.4 14.6 11.4 13.6 11Z" fill="#217346"/></svg>
<svg style="left:856.2px;top:189px;" width="15" height="17.5" viewBox="0 0 15 17.5"><path d="M7.4 0.8L14.2 5.8L11.6 13.6H3.2L0.6 5.8Z" fill="#fff" stroke="#777" stroke-width="1"/><path d="M2.2 17L3.4 14.6H11.4L12.6 17" fill="#f4f4f4" stroke="#d0d0d0" stroke-width="0.6"/></svg>
<svg style="left:885px;top:190.2px;" width="16" height="16" viewBox="0 0 16 16"><path d="M0.4 6H3.2M0.4 15.4H3.2M1.8 6V15.4" stroke="#888" stroke-width="0.9" fill="none"/><path d="M5 0.4V3.2M15.6 0.4V3.2M5 1.8H15.6" stroke="#888" stroke-width="0.9" fill="none"/><rect x="5" y="5" width="10.8" height="10.6" fill="#6e6e6e"/><path d="M7 10.3H13.8M10.4 6.9V13.7M8.2 9.2L7 10.3L8.2 11.4M12.6 9.2L13.8 10.3L12.6 11.4M9.3 8.1L10.4 6.9L11.5 8.1M9.3 12.5L10.4 13.7L11.5 12.5" stroke="#fff" stroke-width="0.8" fill="none"/></svg>
<svg style="left:827.2px;top:228px;" width="4.4" height="6.6" viewBox="0 0 4.4 6.6"><path d="M0.5 0.6L3.8 3.3L0.5 6Z" fill="#fff" stroke="#8a8a8a" stroke-width="0.8"/></svg>
<span style="left:837.36px;top:222px;font-size:9.2px;color:#3b3b3b;letter-spacing:-0.799px;font-weight:bold;">Fill</span>
<svg style="left:827px;top:248px;" width="4.6" height="4.4" viewBox="0 0 4.6 4.4"><path d="M4.4 0.2V4.2H0.4Z" fill="#3b3b3b"/></svg>
<span style="left:837.36px;top:242px;font-size:9.2px;color:#217346;letter-spacing:-0.491px;font-weight:bold;">Line</span>
<svg style="left:838px;top:268.0px;" width="9" height="9" viewBox="0 0 9 9"><circle cx="4.5" cy="4.5" r="3.8" fill="#fcfcfc"/></svg>
<span style="left:850.41px;top:263px;font-size:9.2px;color:#a3a3a3;letter-spacing:0.058px;">No line</span>
<div style="left:851px;top:277.2px;width:6.2px;height:0.8px;background:#a3a3a3;"></div>
<svg style="left:838px;top:284.6px;" width="9" height="9" viewBox="0 0 9 9"><circle cx="4.5" cy="4.5" r="3.8" fill="#fcfcfc"/></svg>
<span style="left:850.38px;top:280px;font-size:9.2px;color:#a3a3a3;letter-spacing:-0.099px;">Solid line</span>
<div style="left:851px;top:293.59999999999997px;width:6.2px;height:0.8px;background:#a3a3a3;"></div>
<svg style="left:838px;top:300.8px;" width="9" height="9" viewBox="0 0 9 9"><circle cx="4.5" cy="4.5" r="3.8" fill="#fcfcfc"/></svg>
<span style="left:850.60px;top:296px;font-size:9.2px;color:#a3a3a3;letter-spacing:-0.108px;">Gradient line</span>
<div style="left:851px;top:309.8px;width:6.2px;height:0.8px;background:#a3a3a3;"></div>
<div style="left:0px;top:508px;width:810px;height:20.6px;background:#e6e6e6;"></div>
<div style="left:0px;top:507.6px;width:810px;height:1px;background:#c2c2c2;"></div>
<div style="left:0px;top:528px;width:1024px;height:1px;background:#d6d6d6;"></div>
<div style="left:124.6px;top:508px;width:47.8px;height:17px;background:#fff;border-bottom:1.6px solid #217346"></div>
<svg style="left:0px;top:500px;" width="300" height="30" viewBox="0 0 300 30"><path d="M75.3 10.5V25.5M220.3 10.5V25.5" stroke="#ababab" stroke-width="1" fill="none"/><path d="M23.6 15.6V20.4L20.6 18Z M41.6 15.6V20.4L44.6 18Z" fill="#c0c0c0"/><circle cx="251.2" cy="18" r="5.3" fill="none" stroke="#777" stroke-width="1"/><path d="M248.4 18H254M251.2 15.2V20.8" stroke="#777" stroke-width="1.1" fill="none"/><path d="M124.5 8V26.4M172.6 8V26.4" stroke="#c6c6c6" stroke-width="1" fill="none"/></svg>
<span style="left:84.17px;top:509px;font-size:10.2px;color:#555;letter-spacing:-0.561px;">Sheet1</span>
<span style="left:132.18px;top:509px;font-size:10.2px;color:#217346;letter-spacing:-0.478px;font-weight:bold;">Sheet2</span>
<span style="left:181.37px;top:509px;font-size:10.2px;color:#555;letter-spacing:-0.415px;">Sheet3</span>
<svg style="left:485.4px;top:513.6px;" width="2" height="9" viewBox="0 0 2 9"><circle cx="1" cy="1" r="0.6" fill="#999"/><circle cx="1" cy="4" r="0.6" fill="#999"/><circle cx="1" cy="7" r="0.6" fill="#999"/></svg>
<div style="left:497.8px;top:513.4px;width:9.4px;height:8.8px;background:#fff;border:1px solid #c9c9c9"></div>
<svg style="left:500.6px;top:515.6px;" width="3.4" height="5.6" viewBox="0 0 3.4 5.6"><path d="M3.4 0V5.6L0 2.8Z" fill="#444"/></svg>
<div style="left:509.8px;top:513.4px;width:251px;height:8.8px;background:#fff;border:1px solid #c9c9c9"></div>
<div style="left:763px;top:514px;width:20.6px;height:9.6px;background:#d8d8d8;"></div>
<div style="left:783.4px;top:513.4px;width:9.4px;height:8.8px;background:#fff;border:1px solid #c9c9c9"></div>
<svg style="left:787.2px;top:515.6px;" width="3.4" height="5.6" viewBox="0 0 3.4 5.6"><path d="M0 0V5.6L3.4 2.8Z" fill="#444"/></svg>
<div style="left:0px;top:529px;width:1024px;height:16.4px;background:#f3f3f3;"></div>
<span style="left:5.65px;top:526px;font-size:8.7px;color:#333333;letter-spacing:-0.383px;">Ready</span>
<div style="left:810px;top:529px;width:27.6px;height:16.4px;background:#c6c6c6;"></div>
<svg style="left:818.4px;top:531.6px;" width="10.4" height="9.6" viewBox="0 0 10.4 9.6"><rect x="0.4" y="0.4" width="9.6" height="8.8" fill="#e9e9e9" stroke="#7a7a7a" stroke-width="0.8"/><path d="M3.6 0.4V9.2M6.8 0.4V9.2M0.4 3.3H10M0.4 6.3H10" stroke="#7a7a7a" stroke-width="0.8" fill="none"/></svg>
<svg style="left:847px;top:531.6px;" width="10.8" height="9.6" viewBox="0 0 10.8 9.6"><rect x="0.4" y="0.4" width="10" height="8.8" fill="none" stroke="#7a7a7a" stroke-width="0.8"/><rect x="2.6" y="2.4" width="5.6" height="4.8" fill="none" stroke="#7a7a7a" stroke-width="0.8"/><path d="M4 4.8H7" stroke="#7a7a7a" stroke-width="0.8"/></svg>
<svg style="left:875.2px;top:531.6px;" width="10.8" height="9.6" viewBox="0 0 10.8 9.6"><rect x="0.4" y="0.4" width="10" height="8.8" fill="none" stroke="#7a7a7a" stroke-width="0.8"/><path d="M3.4 0.4V5.6M6.8 0.4V5.6M0.4 5.6H10.4" stroke="#7a7a7a" stroke-width="0.8" fill="none"/></svg>
<div style="left:898.8px;top:536.2px;width:4.8px;height:1.2px;background:#666;"></div>
<div style="left:906.6px;top:536.4px;width:74.4px;height:0.9px;background:#b8b8b8;"></div>
<div style="left:942px;top:532px;width:4px;height:8.6px;background:#6a6a6a;"></div>
<svg style="left:984px;top:534.2px;" width="5.4" height="5.4" viewBox="0 0 5.4 5.4"><path d="M0 2.7H5.4M2.7 0V5.4" stroke="#666" stroke-width="1.1" fill="none"/></svg>
<span style="left:997.89px;top:526px;font-size:8.7px;color:#333333;letter-spacing:-0.843px;">100%</span>
<div style="left:0;top:545.3px;width:1024px;height:30px;background:linear-gradient(90deg,#203644 0%,#213645 48%,#1d2f47 60%,#1b2947 100%)"></div>
<div style="left:36px;top:545.3px;width:258px;height:30px;background:#f2f2f2;"></div>
<div style="left:36px;top:545.3px;width:258px;height:0.9px;background:#cfcfcf;"></div>
<svg style="left:12px;top:553.6px;" width="12.4" height="12.6" viewBox="0 0 12.4 12.6"><path d="M0 1.8L5.2 1V6H0ZM6 0.9L12.2 0V6H6ZM0 6.8H5.2V11.8L0 11ZM6 6.8H12.2V12.6L6 11.9Z" fill="#fff"/></svg>
<svg style="left:45px;top:554px;" width="12.4" height="12" viewBox="0 0 12.4 12"><circle cx="7.6" cy="4.6" r="3.9" fill="none" stroke="#444" stroke-width="1.1"/><path d="M4.8 7.4L0.6 11.4" stroke="#444" stroke-width="1.2"/></svg>
<span style="left:65.69px;top:552px;font-size:11.3px;color:#4a4a4a;letter-spacing:-0.174px;">Type here to search</span>
<svg style="left:305.6px;top:554px;" width="12" height="12" viewBox="0 0 12 12"><circle cx="6" cy="6" r="5" fill="none" stroke="#fff" stroke-width="1.5"/></svg>
<svg style="left:343px;top:551.6px;" width="15" height="16.6" viewBox="0 0 15 16.6"><path d="M0.6 8.4C0.8 3.6 4 0.4 8 0.4C12.2 0.4 14.6 3.6 14.4 8.6H5.2C5.4 11.6 9 13.2 13.6 11.2V14.8C7.6 17.6 1.6 15.4 1.2 9.4C1.6 6.4 3.6 4.4 6.2 3.4C4 3.8 1.8 5.4 0.6 8.4ZM5.2 6.4H10.2C10.2 3.2 5.8 3.2 5.2 6.4Z" fill="#0a78d6"/></svg>
<svg style="left:378.6px;top:553px;" width="16.6" height="13.6" viewBox="0 0 16.6 13.6"><path d="M0.4 1.2H5.6L7 2.8H16.2V13.2H0.4Z" fill="#f9c53e"/><path d="M0.4 4.4H16.2V13.2H0.4Z" fill="#fcd66a"/><path d="M3.2 8H13.4V13.2H3.2Z" fill="#3a8fe0"/><path d="M5.6 10.6H11V13.2H5.6Z" fill="#fcd66a"/></svg>
<svg style="left:414.4px;top:551px;" width="17.4" height="17.2" viewBox="0 0 17.4 17.2"><path d="M5.6 4.4V3.2A3 3 0 0 1 11.6 3.2V4.4" fill="none" stroke="#fff" stroke-width="0.9"/><path d="M0.6 4.4H16.6V15.6A1.2 1.2 0 0 1 15.4 16.8H1.8A1.2 1.2 0 0 1 0.6 15.6Z" fill="#fff"/><rect x="4.4" y="7.2" width="3.8" height="3.4" fill="#e8512e"/><rect x="9" y="7.2" width="3.8" height="3.4" fill="#7fba1c"/><rect x="4.4" y="11.2" width="3.8" height="3.4" fill="#1ba1e8"/><rect x="9" y="11.2" width="3.8" height="3.4" fill="#fbbc09"/></svg>
<svg style="left:451px;top:552px;" width="18.4" height="15" viewBox="0 0 18.4 15"><path d="M0.4 5.4L9.2 0.4L18 5.4V14.6H0.4Z" fill="#fff"/><path d="M1.6 5.8H16.8L11.6 9.4L13.6 11.8L8.6 9.2Z" fill="#203644"/></svg>
<svg style="left:488px;top:551.4px;" width="17.2" height="17.2" viewBox="0 0 17.2 17.2"><circle cx="8.6" cy="8.6" r="8.4" fill="#dc4437"/><path d="M8.6 8.6L1.3 4.4A8.4 8.4 0 0 0 7.8 17Z" fill="#1fa15d"/><path d="M8.6 8.6L7.8 17A8.4 8.4 0 0 0 16.6 6Z" fill="#fdd03b"/><path d="M8.6 6H16.6A8.4 8.4 0 0 0 1.3 4.4L4 9Z" fill="#dc4437"/><circle cx="8.6" cy="8.6" r="4" fill="#fff"/><circle cx="8.6" cy="8.6" r="3.1" fill="#4a8bf5"/></svg>
<svg style="left:524.6px;top:551.4px;" width="17.2" height="17.2" viewBox="0 0 17.2 17.2"><circle cx="8.6" cy="8.6" r="8.4" fill="#16305a"/><path d="M0.4 10.4A8.4 8.4 0 0 0 16.8 10.4C14 13 4 13.6 0.4 10.4Z" fill="#2a6fb3"/><circle cx="11.6" cy="6" r="2.8" fill="none" stroke="#fff" stroke-width="1.2"/><path d="M0.6 8.6L5.6 10.8L9.4 7.6" stroke="#fff" stroke-width="2.2" fill="none" stroke-linecap="round" stroke-linejoin="round"/><circle cx="5.4" cy="11.4" r="1.9" fill="#fff"/></svg>
<div style="left:552.6px;top:545.3px;width:35.8px;height:30px;background:#4b5b67;"></div>
<svg style="left:561px;top:551.8px;" width="19" height="16" viewBox="0 0 19 16"><rect x="4.4" y="0.2" width="14" height="15.6" rx="1" fill="#1e9e5e"/><rect x="11.4" y="0.2" width="7" height="4" fill="#35c07d"/><rect x="4.4" y="4.2" width="7" height="4" fill="#1a8f55"/><rect x="11.4" y="4.2" width="7" height="4" fill="#24ad69"/><rect x="4.4" y="8.2" width="14" height="4" fill="#147a46"/><rect x="4.4" y="12.2" width="14" height="3.6" fill="#0f5c35"/><rect x="0.2" y="3.6" width="8.6" height="8.6" rx="0.8" fill="#127b45"/><text x="1.9" y="10.7" font-size="7.6" font-weight="bold" fill="#fff">X</text></svg>
<svg style="left:598px;top:552px;" width="18.4" height="16" viewBox="0 0 18.4 16"><circle cx="10.4" cy="8" r="7.8" fill="#e9603f"/><path d="M10.4 0.2A7.8 7.8 0 0 1 18.2 8H10.4Z" fill="#f47a55"/><path d="M10.4 8H18.2A7.8 7.8 0 0 1 4 12.6Z" fill="#d5492d"/><rect x="0.2" y="3.6" width="8.6" height="8.6" rx="0.8" fill="#c33e25"/><text x="2" y="10.7" font-size="7.6" font-weight="bold" fill="#fff">P</text></svg>
<svg style="left:635px;top:551.8px;" width="19" height="16" viewBox="0 0 19 16"><rect x="4.4" y="0.2" width="14" height="15.6" rx="1" fill="#2b7cd3"/><rect x="4.4" y="0.2" width="14" height="4" fill="#41a5ee"/><rect x="4.4" y="8.2" width="14" height="4" fill="#185abd"/><rect x="4.4" y="12.2" width="14" height="3.6" fill="#103f91"/><rect x="0.2" y="3.6" width="8.6" height="8.6" rx="0.8" fill="#185abd"/><text x="0.9" y="10.6" font-size="7.4" font-weight="bold" fill="#fff">W</text></svg>
<svg style="left:674px;top:553px;" width="16" height="15" viewBox="0 0 16 15"><path d="M0.4 1.4L2 0.4H9.4V13.4L2 14.8L0.4 13.6Z" fill="#f7d37c"/><path d="M0.4 1.4L2 2.2V14.8L0.4 13.6Z" fill="#fbe9b7"/><path d="M6 14.4H13.6A2 2 0 0 0 13.6 10.4A3 3 0 0 0 8 9.4A2.4 2.4 0 0 0 6 14.4Z" fill="#1f78d8"/></svg>
<div style="left:371.6px;top:573.2px;width:30.399999999999977px;height:2px;background:#85bdea;"></div>
<div style="left:481.8px;top:573.2px;width:30.400000000000034px;height:2px;background:#85bdea;"></div>
<div style="left:519px;top:573.2px;width:30px;height:2px;background:#85bdea;"></div>
<div style="left:552.6px;top:573.2px;width:35.799999999999955px;height:2px;background:#85bdea;"></div>
<div style="left:591.8px;top:573.2px;width:30.200000000000045px;height:2px;background:#85bdea;"></div>
<div style="left:629px;top:573.2px;width:30px;height:2px;background:#85bdea;"></div>
<div style="left:665.6px;top:573.2px;width:30.0px;height:2px;background:#85bdea;"></div>
<svg style="left:846px;top:557px;" width="9.4" height="5.4" viewBox="0 0 9.4 5.4"><path d="M0.5 4.9L4.7 0.7L8.9 4.9" fill="none" stroke="#f4f4f4" stroke-width="1.1"/></svg>
<svg style="left:862px;top:556px;" width="13.4" height="8.4" viewBox="0 0 13.4 8.4"><path d="M3.2 8.2H11A2.2 2.2 0 0 0 11 3.8A3.4 3.4 0 0 0 5 2.6A3 3 0 0 0 3.2 8.2Z" fill="#f4f4f4"/></svg>
<svg style="left:881px;top:557px;" width="12.4" height="7.4" viewBox="0 0 12.4 7.4"><rect x="0.5" y="0.5" width="10.4" height="6.2" fill="none" stroke="#f4f4f4" stroke-width="1"/><rect x="11" y="2.2" width="1.2" height="2.8" fill="#f4f4f4"/><rect x="1.8" y="1.8" width="4.6" height="3.6" fill="#f4f4f4"/></svg>
<svg style="left:900.6px;top:555.4px;" width="10" height="10.4" viewBox="0 0 10 10.4"><g fill="none" stroke="#f4f4f4" stroke-width="1"><path d="M0.6 9.6A9 9 0 0 1 9.4 0.8"/><path d="M2.8 9.6A6.8 6.8 0 0 1 9.4 3"/><path d="M5 9.6A4.6 4.6 0 0 1 9.4 5.2"/></g><rect x="7.6" y="7.8" width="2" height="2" fill="#f4f4f4"/></svg>
<svg style="left:916px;top:555.6px;" width="11.4" height="9.4" viewBox="0 0 11.4 9.4"><path d="M0.6 3.2H2.6L5 0.8V8.6L2.6 6.2H0.6Z" fill="none" stroke="#f4f4f4" stroke-width="0.9"/><path d="M7 3L10.4 6.4M10.4 3L7 6.4" stroke="#f4f4f4" stroke-width="0.9" fill="none"/></svg>
<span style="left:946.67px;top:543px;font-size:9.2px;color:#f4f4f4;letter-spacing:-0.569px;">01:01</span>
<span style="left:936.34px;top:557px;font-size:9.2px;color:#f4f4f4;letter-spacing:-0.220px;">14/11/2019</span>
<svg style="left:993px;top:554px;" width="12.4" height="10.4" viewBox="0 0 12.4 10.4"><path d="M0.4 0.4H12V8H3.6V10.2L1.4 8H0.4Z" fill="#f4f4f4"/><path d="M2.4 2.4H10M2.4 4.2H10M2.4 6H10" stroke="#1b2947" stroke-width="0.7" fill="none"/></svg>
<div style="left:998.6px;top:559.2px;width:10.4px;height:10.4px;border-radius:50%;background:#303030;border:0.8px solid #d8d8d8"></div>
<span style="left:1002.01px;top:556px;font-size:8px;color:#fff;font-weight:bold;">1</span>
<div style="left:1020.2px;top:545.3px;width:0.8px;height:30px;background:#7c8796;"></div>
</div></body></html>
